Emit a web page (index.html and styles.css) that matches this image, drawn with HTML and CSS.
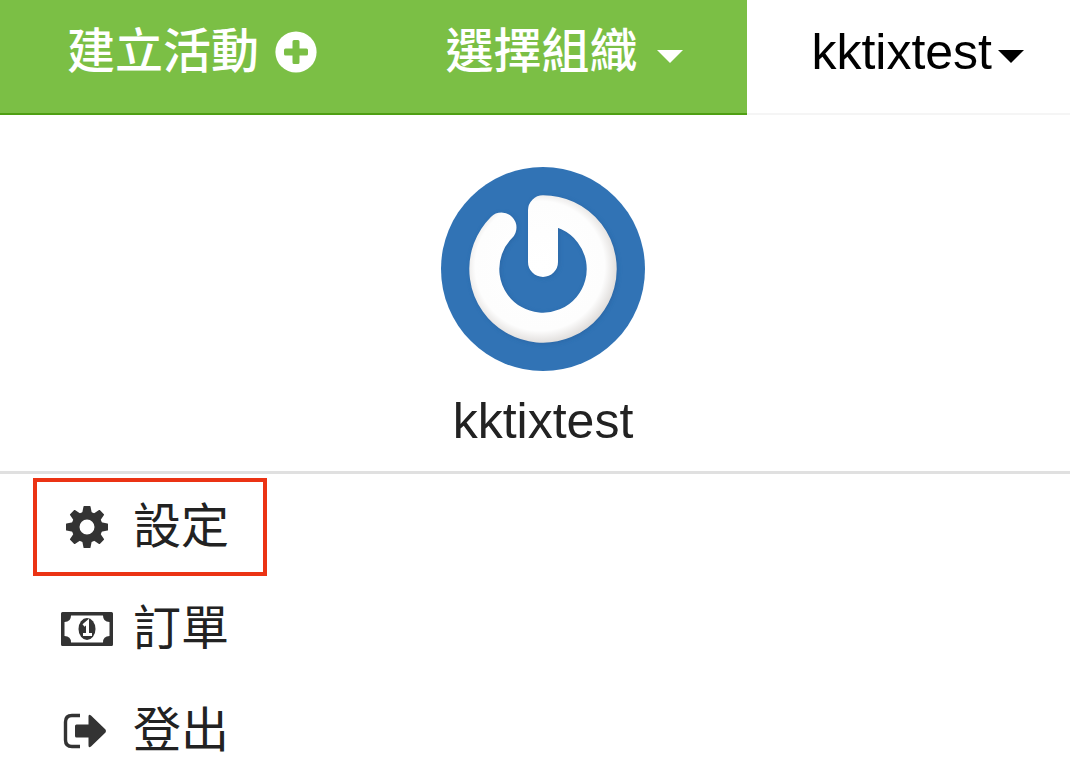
FILE: index.html
```
<!DOCTYPE html>
<html lang="zh-Hant">
<head>
	<meta charset="utf-8">
	<meta name="viewport" content="width=device-width, initial-scale=1">
	<title>kktixtest</title>
	<link rel="stylesheet" href="styles.css">
</head>
<body>
	<header class="topbar">
		<nav class="main-nav">
			<a class="nav-link" href="#create">
				建立活動
				<svg class="icon-plus" viewBox="0 0 42 42" aria-hidden="true">
					<circle cx="21" cy="21" r="20.6" fill="#fff"/>
					<path d="M17.500 10.500q0-1.500 1.500-1.500h4q1.500 0 1.500 1.500V17.500h7q1.500 0 1.500 1.500v4q0 1.500-1.500 1.500H24.500v7q0 1.500-1.500 1.500h-4q-1.500 0-1.500-1.500V24.500h-7Q9 24.500 9 23v-4Q9 17.500 10.500 17.500H17.500z" fill="#7bbf45"/>
				</svg>
			</a>
			<button class="nav-link nav-org" type="button">
				選擇組織
				<span class="caret"></span>
			</button>
		</nav>
		<button class="user-toggle" type="button">
			kktixtest
			<span class="caret"></span>
		</button>
	</header>

	<section class="profile">
		<svg class="avatar" viewBox="0 0 204 204" role="img" aria-label="kktixtest">
			<defs>
				<radialGradient id="ring" gradientUnits="userSpaceOnUse" cx="99" cy="99" r="78">
					<stop offset="0" stop-color="#fff"/>
					<stop offset="0.83" stop-color="#fdfdfd"/>
					<stop offset="1" stop-color="#dfdcda"/>
				</radialGradient>
				<filter id="soft" x="-20%" y="-20%" width="140%" height="140%">
					<feGaussianBlur stdDeviation="2"/>
				</filter>
			</defs>
			<circle cx="102" cy="102" r="102" fill="#3173b5"/>
			<g fill="none" stroke-width="30" stroke-linecap="round" stroke-linejoin="round">
				<path d="M60.500 60.500A58.700 58.700 0 1 0 102 43.300V95" stroke="#265f9c" opacity="0.6" filter="url(#soft)" transform="translate(1 1)"/>
				<path d="M60.500 60.500A58.700 58.700 0 1 0 102 43.300V95" stroke="url(#ring)"/>
			</g>
		</svg>
		<p class="profile-name">kktixtest</p>
	</section>

	<ul class="menu">
		<li>
			<a class="menu-link highlight" href="#settings">
				<svg class="menu-icon" viewBox="0 0 52 42" aria-hidden="true">
					<defs>
						<path id="tooth" d="M21 8L22.500 0.500Q22.600 0 23.100 0H28.900Q29.400 0 29.500 0.500L31 8z"/>
					</defs>
					<circle cx="26" cy="21" r="11.500" fill="none" stroke="#333" stroke-width="8"/>
					<g fill="#333">
						<use href="#tooth"/>
						<use href="#tooth" transform="rotate(45 26 21)"/>
						<use href="#tooth" transform="rotate(90 26 21)"/>
						<use href="#tooth" transform="rotate(135 26 21)"/>
						<use href="#tooth" transform="rotate(180 26 21)"/>
						<use href="#tooth" transform="rotate(225 26 21)"/>
						<use href="#tooth" transform="rotate(270 26 21)"/>
						<use href="#tooth" transform="rotate(315 26 21)"/>
					</g>
				</svg>
				設定
			</a>
		</li>
		<li>
			<a class="menu-link" href="#orders">
				<svg class="menu-icon" viewBox="0 0 52 42" aria-hidden="true">
					<path fill="#333" fill-rule="evenodd" d="M1.500 4H50.500Q52 4 52 5.500V36.500Q52 38 50.500 38H1.500Q0 38 0 36.500V5.500Q0 4 1.500 4zM10 7.500Q10 14 3.500 14V28Q10 28 10 34.500H42Q42 28 48.500 28V14Q42 14 42 7.500z"/>
					<ellipse cx="26" cy="21" rx="8.500" ry="11" fill="#333"/>
					<path d="M22.500 17.500L26.500 14V26M22 26.500H31" fill="none" stroke="#fff" stroke-width="3"/>
				</svg>
				訂單
			</a>
		</li>
		<li>
			<a class="menu-link" href="#logout">
				<svg class="menu-icon" viewBox="0 0 52 42" aria-hidden="true">
					<path d="M19 5.500H11Q4.500 5.500 4.500 12V30Q4.500 36.500 11 36.500H19" fill="none" stroke="#333" stroke-width="3.400"/>
					<path d="M14 16Q14 14.500 15.500 14.500H27.500V6.500Q27.500 3.500 30 5.500L44.500 19.500Q45.500 21 44.500 22.500L30 36.500Q27.500 38.500 27.500 35.500V27.500H15.500Q14 27.500 14 26z" fill="#333"/>
				</svg>
				登出
			</a>
		</li>
	</ul>
</body>
</html>
```
FILE: styles.css
```
body {
	margin: 0;
	background-color: #fff;
	color: #222;
	font-family: "Liberation Sans", "Noto Sans CJK TC", sans-serif;
	font-size: 48px;
}

a {
	color: inherit;
	text-decoration: none;
}

button {
	border: none;
	background: none;
	font-family: inherit;
	cursor: pointer;
}

.topbar {
	display: flex;
}

.main-nav {
	flex: 1;
	display: flex;
	justify-content: space-between;
	padding: 16px 64px 25px 67px;
	background-color: #7bbf45;
	border-bottom: 2px solid #4f9f13;
}

.nav-link {
	display: flex;
	align-items: center;
	gap: 16px;
	padding: 0;
	color: #fff;
	font-size: 48px;
	font-weight: 500;
	line-height: 72px;
}

.nav-org {
	gap: 20px;
}

.icon-plus {
	width: 42px;
	height: 42px;
}

.caret {
	border-top: 13px solid;
	border-left: 13px solid transparent;
	border-right: 13px solid transparent;
	margin-top: 8px;
}

.user-toggle {
	display: flex;
	align-items: center;
	gap: 6px;
	padding: 16px 46px 25px 64px;
	border-bottom: 2px solid #f5f5f5;
	color: #000;
	font-size: 50px;
	line-height: 72px;
}

.profile {
	display: flex;
	flex-direction: column;
	align-items: center;
	padding: 52px 0 20px 16px;
	border-bottom: 3px solid #e0e0e0;
}

.avatar {
	width: 204px;
	height: 204px;
}

.profile-name {
	margin: 20px 0 0;
	font-size: 50px;
	line-height: 60px;
}

.menu {
	display: flex;
	flex-direction: column;
	gap: 4px;
	margin: 0;
	padding: 4px 33px 0;
	list-style: none;
}

.menu li {
	display: flex;
}

.menu-link {
	display: flex;
	align-items: center;
	gap: 20px;
	padding: 9px 34px 9px 24px;
	border: 4px solid transparent;
	line-height: 72px;
}

.menu-link.highlight {
	border-color: #eb3314;
}

.menu-icon {
	width: 52px;
	height: 42px;
}
```
